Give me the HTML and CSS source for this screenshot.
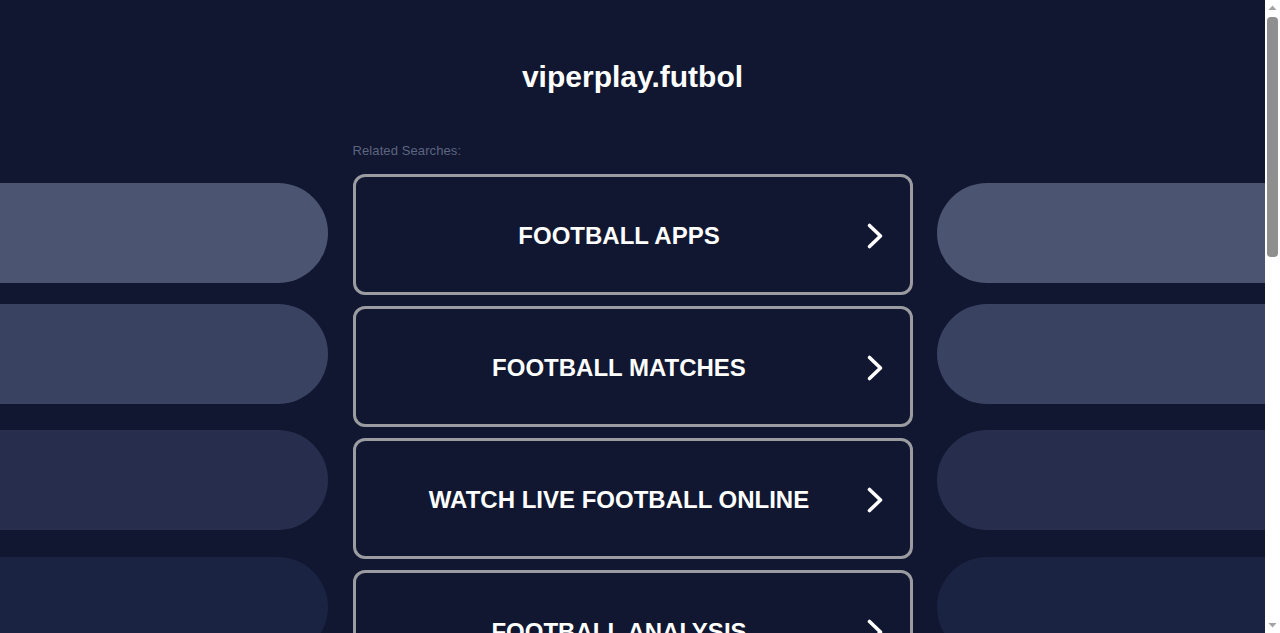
FILE: index.html
```html
<!DOCTYPE html>
<html lang="en">
<head>
<meta charset="utf-8">
<title>viperplay.futbol</title>
<link rel="stylesheet" href="styles.css">
</head>
<body>
<div class="page">
  <header class="header">
    <h1 class="title">viperplay.futbol</h1>
  </header>
  <div class="layout">
    <div class="deco deco-left">
      <div class="pill pill-1"></div>
      <div class="pill pill-2"></div>
      <div class="pill pill-3"></div>
      <div class="pill pill-4"></div>
    </div>
    <main class="content">
      <p class="label">Related Searches:</p>
      <div class="links">
        <a class="link" href="#"><span class="link-text">FOOTBALL APPS</span><svg class="chev" viewBox="0 0 20 28" width="20" height="28"><path d="M4.5 3.5 L15.5 14 L4.5 24.5"/></svg></a>
        <a class="link" href="#"><span class="link-text">FOOTBALL MATCHES</span><svg class="chev" viewBox="0 0 20 28" width="20" height="28"><path d="M4.5 3.5 L15.5 14 L4.5 24.5"/></svg></a>
        <a class="link" href="#"><span class="link-text">WATCH LIVE FOOTBALL ONLINE</span><svg class="chev" viewBox="0 0 20 28" width="20" height="28"><path d="M4.5 3.5 L15.5 14 L4.5 24.5"/></svg></a>
        <a class="link" href="#"><span class="link-text">FOOTBALL ANALYSIS</span><svg class="chev" viewBox="0 0 20 28" width="20" height="28"><path d="M4.5 3.5 L15.5 14 L4.5 24.5"/></svg></a>
      </div>
    </main>
    <div class="deco deco-right">
      <div class="pill pill-1"></div>
      <div class="pill pill-2"></div>
      <div class="pill pill-3"></div>
      <div class="pill pill-4"></div>
    </div>
  </div>
</div>
<div class="scrollbar" aria-hidden="true">
  <svg class="sb-arrow" viewBox="0 0 15 15" width="15" height="15"><path d="M3.5 10 L7.5 5.5 L11.5 10 Z"/></svg>
  <div class="sb-track"><div class="sb-thumb"></div></div>
  <svg class="sb-arrow" viewBox="0 0 15 15" width="15" height="15"><path d="M3.5 5 L7.5 9.5 L11.5 5 Z"/></svg>
</div>
</body>
</html>
```
FILE: styles.css
```css
html, body {
  margin: 0;
  padding: 0;
  background: #111730;
}
body {
  font-family: "Liberation Sans", Arial, sans-serif;
  color: #ffffff;
  padding-right: 15px;
  height: 633px;
  overflow: hidden;
}
.page {
  height: 633px;
  overflow: hidden;
}
.header {
  padding-top: 60px;
  text-align: center;
}
.title {
  margin: 0;
  font-size: 30px;
  line-height: 34px;
  font-weight: bold;
  color: #ffffff;
}
.layout {
  display: grid;
  grid-template-columns: 1fr 560px 1fr;
  column-gap: 24.5px;
  margin-top: 49px;
}
.deco {
  display: flex;
  flex-direction: column;
  padding-top: 40px;
}
.pill {
  height: 100px;
  margin-bottom: 26px;
}
.pill-1 { background: #4b5571; margin-bottom: 21px; }
.pill-2 { background: #3a4262; }
.pill-3 { background: #272e4d; margin-bottom: 27px; }
.pill-4 { background: #1b2342; }
.deco-left .pill { border-radius: 0 50px 50px 0; }
.deco-right .pill { border-radius: 50px 0 0 50px; }
.content {
  min-width: 0;
}
.label {
  margin: 0 0 16px 0;
  font-size: 13px;
  line-height: 15px;
  letter-spacing: 0.1px;
  color: #5d6580;
}
.links {
  display: flex;
  flex-direction: column;
  gap: 11px;
}
.link {
  display: flex;
  align-items: center;
  box-sizing: border-box;
  height: 121px;
  padding: 2px 25px 0 18px;
  border: 3px solid #9b9ca1;
  border-radius: 12px;
  color: #ffffff;
  text-decoration: none;
}
.link-text {
  flex: 1;
  text-align: center;
  font-size: 24px;
  font-weight: bold;
  line-height: 28px;
}
.chev {
  flex: none;
  fill: none;
  stroke: #ffffff;
  stroke-width: 3.6;
  stroke-linecap: round;
  stroke-linejoin: round;
}
.scrollbar {
  position: fixed;
  top: 0;
  right: 0;
  width: 15px;
  height: 633px;
  display: flex;
  flex-direction: column;
  background: #ffffff;
}
.sb-arrow {
  flex: none;
  display: block;
  fill: #a3a3a3;
}
.sb-track {
  flex: 1;
  padding: 2px 2px 0 2px;
}
.sb-thumb {
  height: 240px;
  border-radius: 4px;
  background: #8f8f8f;
}
```
